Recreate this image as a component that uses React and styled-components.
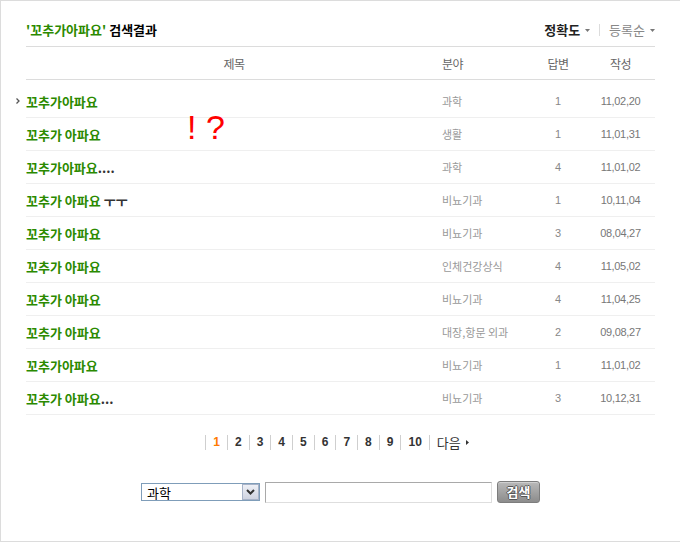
import React from "react";
import styled, { createGlobalStyle } from "styled-components";

const GlobalStyle = createGlobalStyle`
  html, body { margin: 0; padding: 0; background: #fff; }
  body { font-family: "Noto Sans CJK KR", "Liberation Sans", sans-serif; }
  * { box-sizing: border-box; }
`;

const GREEN = "#2b8a00";

const Frame = styled.div`
  position: relative;
  width: 680px;
  height: 542px;
  border: 1px solid #dcdcdc;
  border-right: none;
  padding: 0 25px;
  background: #fff;
`;

const TitleBar = styled.div`
  display: flex;
  justify-content: space-between;
  align-items: center;
  padding: 21px 0 8px;
  line-height: 16px;
  border-bottom: 1px solid #dcdcdc;
`;

const Title = styled.h1`
  margin: 0;
  font-size: 13px;
  font-weight: bold;
  color: #000;
`;

const Query = styled.span`
  color: ${GREEN};
`;

const SortGroup = styled.div`
  display: flex;
  align-items: center;
  font-size: 13px;
`;

const SortItem = styled.span`
  display: flex;
  align-items: center;
  gap: 5px;
  color: ${(p) => (p.$active ? "#222" : "#888")};
  font-weight: ${(p) => (p.$active ? "bold" : "normal")};
`;

const SortSep = styled.span`
  width: 1px;
  height: 12px;
  background: #dcdcdc;
  margin: 0 9px 0 9px;
`;

const Grid = styled.div`
  display: grid;
  grid-template-columns: 416px 88px 56px 1fr;
  align-items: center;
`;

const HeadRow = styled(Grid)`
  height: 33px;
  border-bottom: 1px solid #dcdcdc;
  font-size: 12px;
  letter-spacing: -0.5px;
  color: #666;
`;

const HeadCell = styled.div`
  text-align: ${(p) => p.$align || "center"};
`;

const List = styled.div``;

const Row = styled(Grid)`
  height: ${(p) => (p.$first ? 38 : 33)}px;
  padding-top: ${(p) => (p.$first ? 5 : 0)}px;
  border-bottom: 1px solid #efefef;
`;

const TitleCell = styled.div`
  position: relative;
  font-size: 13px;
  font-weight: bold;
  color: ${GREEN};
  white-space: pre;
`;

const Extra = styled.span`
  color: #333;
`;

const Marker = styled.svg`
  position: absolute;
  left: -10px;
  top: 50%;
  margin-top: -3px;
`;

const CatCell = styled.div`
  font-size: 11px;
  color: #999;
`;

const NumCell = styled.div`
  text-align: center;
  font-family: "Liberation Sans", sans-serif;
  font-size: 11px;
  color: #888;
`;

const DateCell = styled.div`
  text-align: center;
  font-family: "Liberation Sans", sans-serif;
  font-size: 11px;
  letter-spacing: -0.3px;
  color: #777;
`;

const Exclaim = styled.div`
  position: absolute;
  left: 186px;
  top: 109px;
  font-family: "Liberation Sans", sans-serif;
  font-size: 34px;
  line-height: 34px;
  color: #ff0000;
  white-space: pre;
`;

const Pager = styled.div`
  display: flex;
  justify-content: center;
  margin-top: 20px;
`;

const PageItem = styled.span`
  display: flex;
  align-items: center;
  gap: 5px;
  border-left: 1px solid #cfcfcf;
  padding: 0 7px;
  height: 15px;
  line-height: 15px;
  font-family: ${(p) => (p.$text ? '"Noto Sans CJK KR", sans-serif' : '"Liberation Sans", sans-serif')};
  font-size: ${(p) => (p.$text ? 13 : 12)}px;
  font-weight: ${(p) => (p.$text ? "normal" : "bold")};
  color: ${(p) => (p.$current ? "#ff7a00" : "#333")};
`;

const SearchForm = styled.form`
  display: flex;
  justify-content: center;
  align-items: center;
  gap: 5px;
  margin-top: 31px;
`;

const SelectBox = styled.div`
  display: flex;
  align-items: center;
  justify-content: space-between;
  width: 119px;
  height: 18px;
  border: 1px solid #7f9db9;
  padding-left: 5px;
  font-size: 13px;
  color: #000;
  background: #fff;
`;

const SelectButton = styled.span`
  display: flex;
  align-items: center;
  justify-content: center;
  width: 17px;
  height: 16px;
  border: 1px solid #a8b3c8;
  background: linear-gradient(#eef0f6, #cfd3e0);
`;

const TextInput = styled.input`
  width: 227px;
  height: 21px;
  border: 1px solid;
  border-color: #a9a9a9 #dedede #dedede #a9a9a9;
  padding: 0 3px;
  outline: none;
`;

const SearchButton = styled.button`
  width: 43px;
  height: 22px;
  border: 1px solid #7d7d7d;
  border-radius: 3px;
  background: linear-gradient(#b9b9b9, #8c8c8c);
  color: #fff;
  font-family: "Noto Sans CJK KR", sans-serif;
  font-size: 13px;
  font-weight: bold;
  padding: 0;
  line-height: 18px;
  text-shadow: 1px 0 0 #555, -1px 0 0 #555, 0 1px 0 #555, 0 -1px 0 #555;
  box-shadow: inset 0 1px 0 #d0d0d0;
`;

const DownTri = () => (
  <svg width="5" height="3" viewBox="0 0 5 3">
    <path d="M0 0H5L2.5 3Z" fill="#777" />
  </svg>
);

const RightTri = () => (
  <svg width="3" height="5" viewBox="0 0 3 5">
    <path d="M0 0V5L3 2.5Z" fill="#333" />
  </svg>
);

const rows = [
  { title: "꼬추가아파요", cat: "과학", n: 1, date: "11,02,20", current: true },
  { title: "꼬추가 아파요", cat: "생활", n: 1, date: "11,01,31" },
  { title: "꼬추가아파요", extra: "....", cat: "과학", n: 4, date: "11,01,02" },
  { title: "꼬추가 아파요", extra: " ㅜㅜ", cat: "비뇨기과", n: 1, date: "10,11,04" },
  { title: "꼬추가 아파요", cat: "비뇨기과", n: 3, date: "08,04,27" },
  { title: "꼬추가 아파요", cat: "인체건강상식", n: 4, date: "11,05,02" },
  { title: "꼬추가 아파요", cat: "비뇨기과", n: 4, date: "11,04,25" },
  { title: "꼬추가 아파요", cat: "대장,항문 외과", n: 2, date: "09,08,27" },
  { title: "꼬추가아파요", cat: "비뇨기과", n: 1, date: "11,01,02" },
  { title: "꼬추가 아파요", extra: "...", cat: "비뇨기과", n: 3, date: "10,12,31" },
];

export default function App() {
  return (
    <>
      <GlobalStyle />
      <Frame>
        <TitleBar>
          <Title>
            <Query>'꼬추가아파요'</Query> 검색결과
          </Title>
          <SortGroup>
            <SortItem $active>
              정확도 <DownTri />
            </SortItem>
            <SortSep />
            <SortItem>
              등록순 <DownTri />
            </SortItem>
          </SortGroup>
        </TitleBar>

        <HeadRow>
          <HeadCell>제목</HeadCell>
          <HeadCell $align="left">분야</HeadCell>
          <HeadCell>답변</HeadCell>
          <HeadCell>작성</HeadCell>
        </HeadRow>

        <List>
          {rows.map((r, i) => (
            <Row key={i} $first={i === 0}>
              <TitleCell>
                {r.current && (
                  <Marker width="4" height="6" viewBox="0 0 4 6">
                    <path d="M0.5 0.5L3 3L0.5 5.5" stroke="#555" strokeWidth="1.3" fill="none" />
                  </Marker>
                )}
                {r.title}
                {r.extra && <Extra>{r.extra}</Extra>}
              </TitleCell>
              <CatCell>{r.cat}</CatCell>
              <NumCell>{r.n}</NumCell>
              <DateCell>{r.date}</DateCell>
            </Row>
          ))}
        </List>

        <Pager>
          {[1, 2, 3, 4, 5, 6, 7, 8, 9, 10].map((p) => (
            <PageItem key={p} $current={p === 1}>
              {p}
            </PageItem>
          ))}
          <PageItem $text>
            다음 <RightTri />
          </PageItem>
        </Pager>

        <SearchForm onSubmit={(e) => e.preventDefault()}>
          <SelectBox>
            과학
            <SelectButton>
              <svg width="9" height="6" viewBox="0 0 9 6">
                <path d="M1 1L4.5 4.5L8 1" stroke="#333" strokeWidth="2" fill="none" />
              </svg>
            </SelectButton>
          </SelectBox>
          <TextInput type="text" />
          <SearchButton type="submit">검색</SearchButton>
        </SearchForm>

        <Exclaim>! ?</Exclaim>
      </Frame>
    </>
  );
}
